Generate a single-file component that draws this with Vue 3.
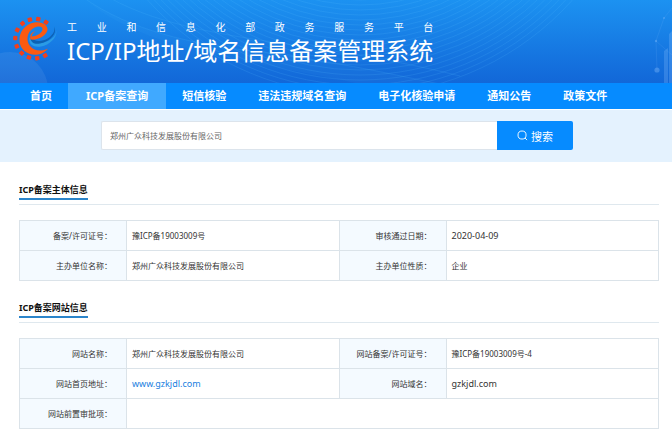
<script setup>
import { ref } from 'vue'

const navItems = ['首页', 'ICP备案查询', '短信核验', '违法违规域名查询', '电子化核验申请', '通知公告', '政策文件']
const activeItem = ref('ICP备案查询')
const keyword = ref('郑州广众科技发展股份有限公司')

const sections = [
  {
    title: 'ICP备案主体信息',
    rows: [
      [{ label: '备案/许可证号', value: '豫ICP备19003009号' }, { label: '审核通过日期', value: '2020-04-09', latin: true }],
      [{ label: '主办单位名称', value: '郑州广众科技发展股份有限公司' }, { label: '主办单位性质', value: '企业' }]
    ]
  },
  {
    title: 'ICP备案网站信息',
    rows: [
      [{ label: '网站名称', value: '郑州广众科技发展股份有限公司' }, { label: '网站备案/许可证号', value: '豫ICP备19003009号-4' }],
      [{ label: '网站首页地址', value: 'www.gzkjdl.com', latin: true, link: true }, { label: '网站域名', value: 'gzkjdl.com', latin: true }],
      [{ label: '网站前置审批项', value: '' }]
    ]
  }
]

const rings = Array.from({ length: 20 }, (_, i) => 285 - i * 5)
const teeth = Array.from({ length: 11 }, (_, i) => 59 + i * 24.5)
</script>

<template>
  <div class="page">
    <header class="banner">
      <svg class="backdrop" viewBox="0 0 672 83" preserveAspectRatio="none" aria-hidden="true">
        <path d="M84 -2C130 30 190 44 260 52C340 62 400 76 440 84L360 84C250 60 140 50 84 -2Z" fill="#5cc4ff" fill-opacity=".05" />
        <path d="M84 -2C130 30 190 44 260 52C340 62 400 76 440 84M110 -2C160 26 230 36 300 46C370 56 420 66 460 76" fill="none" stroke="#5cc4ff" stroke-opacity=".14" />
        <g fill="none" stroke="#5cc4ff" stroke-opacity=".15">
          <circle v-for="r in rings" :key="r" cx="360" cy="-190" :r="r" />
        </g>
        <circle cx="10" cy="90" r="38" fill="#fff" fill-opacity=".07" />
        <g fill="#8fc4ff" fill-opacity=".35">
          <circle cx="657" cy="70" r="2.6" />
          <circle cx="656" cy="41" r="1.2" />
          <circle cx="664" cy="18" r="1" />
          <path d="M664 51l4-3v35h-4zM669 34l3-3v52h-3z" fill-opacity=".25" />
        </g>
        <path d="M657 70L656 41L664 18L672 8M656 41L672 55" fill="none" stroke="#8fc4ff" stroke-opacity=".2" stroke-width=".6" />
      </svg>
      <svg class="logo" viewBox="0 0 44 46" aria-hidden="true">
        <g fill="#f0401c">
          <rect v-for="a in teeth" :key="a" x="39.6" y="21.4" width="4.2" height="4.4" rx=".8" :transform="`rotate(${a} 22 23.6)`" />
        </g>
        <path d="M42 11C47 18 38 27 28 28C21 28.500 18 26 16.500 22C15 29 20 33 28 31.500C39 29.500 47 19 42 11Z" fill="#2a9be6" />
        <path d="M41 11.500C43.500 18 35 25 27 26C22 26 19 24 17.500 21.500C17 27 21 29.500 27 28.500C37 26.500 45 18 41 11.500Z" fill="#0c62b4" />
        <path d="M17.500 24.500C25 25.500 33.500 20.500 34.500 15C35 9.500 28 6.500 21.500 7.500C12 9 6 17 6.500 26C7 35.500 16 41 25 39.500C29.500 38.700 33 36.500 35 33.500C28.500 37 21 36 17 31C12.500 25 14.500 17 20 13.500C24.500 10.700 30 11 29.500 14.500C28.800 18.500 23 21.500 18.500 21.500C19 19 20.500 17.500 22.500 16C18 17.500 16.500 21 17.500 24.500Z" fill="#fb5a10" />
      </svg>
      <div class="brand">
        <p class="platform">工业和信息化部政务服务平台</p>
        <h1>ICP/IP地址/域名信息备案管理系统</h1>
      </div>
    </header>

    <nav class="menu">
      <a v-for="item in navItems" :key="item" href="#" :class="{ active: item === activeItem }" @click.prevent="activeItem = item">{{ item }}</a>
    </nav>

    <form class="search" @submit.prevent>
      <input v-model="keyword" type="text" aria-label="备案查询">
      <button type="submit">
        <svg viewBox="0 0 12 12" aria-hidden="true">
          <circle cx="5.5" cy="5.5" r="4.4" />
          <path d="M8.7 8.7L11 11" />
        </svg>
        <span>搜索</span>
      </button>
    </form>

    <main>
      <section v-for="section in sections" :key="section.title">
        <div class="heading"><h2>{{ section.title }}</h2></div>
        <table>
          <colgroup><col class="c-label"><col class="c-value"><col class="c-label"><col class="c-value"></colgroup>
          <tbody>
            <tr v-for="(row, i) in section.rows" :key="i">
              <template v-for="cell in row" :key="cell.label">
                <th scope="row">{{ cell.label }}：</th>
                <td :colspan="row.length === 1 ? 3 : 1" :class="{ latin: cell.latin }">
                  <a v-if="cell.link" :href="'http://' + cell.value">{{ cell.value }}</a>
                  <template v-else>{{ cell.value }}</template>
                </td>
              </template>
            </tr>
          </tbody>
        </table>
      </section>
    </main>
  </div>
</template>

<style>
body {
  margin: 0;
  background: #fff;
}
</style>

<style scoped>
.page,
.page input,
.page button {
  font-family: "Noto Sans", "Noto Sans CJK SC", sans-serif;
}
.page {
  color: #333;
  font-size: 8px;
}
.banner {
  position: relative;
  display: flex;
  align-items: flex-start;
  gap: 10px;
  height: 83px;
  padding: 15px 13px 0;
  box-sizing: border-box;
  overflow: hidden;
  background: linear-gradient(#1c92f1, #1267d8);
  color: #fff;
}
.backdrop {
  position: absolute;
  inset: 0;
  width: 100%;
  height: 100%;
}
.logo {
  position: relative;
  width: 44px;
  height: 46px;
  flex: none;
}
.brand {
  position: relative;
  padding-top: 5px;
}
.platform {
  margin: 0;
  font-size: 10px;
  line-height: 14px;
  text-align-last: justify;
}
h1 {
  margin: 0;
  font-size: 24px;
  font-weight: 400;
  line-height: 34px;
  white-space: nowrap;
}
.menu {
  display: flex;
  padding: 0 14px;
  background: #068bff;
}
.menu a {
  padding: 0 16px;
  color: #fff;
  font-size: 11px;
  font-weight: 700;
  line-height: 26px;
  text-decoration: none;
  white-space: nowrap;
}
.menu a.active {
  padding: 0 18px;
  background: #40a9ff;
}
.search {
  display: flex;
  margin-top: 1px;
  padding: 11px 99px 12px 101px;
  background: #e4f2fe;
}
.search input {
  flex: 1;
  min-width: 0;
  height: 29px;
  padding: 0 8px;
  box-sizing: border-box;
  border: 1px solid #dce4ec;
  border-right: 0;
  border-radius: 2px 0 0 2px;
  background: #fff;
  color: #666;
  font-size: 8px;
  outline: none;
}
.search button {
  display: flex;
  align-items: center;
  justify-content: center;
  gap: 3px;
  width: 76px;
  padding: 0;
  border: 0;
  border-radius: 0 2px 2px 0;
  background: #068bff;
  color: #fff;
  font-size: 11px;
}
.search svg {
  width: 11px;
  height: 11px;
  fill: none;
  stroke: #fff;
}
main {
  padding: 19px 13px 0 19px;
}
.heading {
  display: flex;
  margin-bottom: 15px;
  border-bottom: 1px solid #dfe8ee;
}
h2 {
  margin: 0 0 4px;
  border-bottom: 2px solid #2b85cb;
  color: #111;
  font-size: 9px;
  font-weight: 700;
  line-height: 17px;
}
section + section {
  margin-top: 18px;
}
table {
  width: 100%;
  border-collapse: collapse;
  table-layout: fixed;
}
.c-label {
  width: 107px;
}
th,
td {
  height: 29px;
  padding: 0;
  border: 1px solid #dbe3e9;
  font-weight: 400;
}
th {
  padding-right: 14px;
  background: #f4faff;
  text-align: right;
}
td {
  padding-left: 5px;
}
.latin {
  font-size: 9px;
}
td a {
  color: #2080e0;
  text-decoration: none;
}
</style>
